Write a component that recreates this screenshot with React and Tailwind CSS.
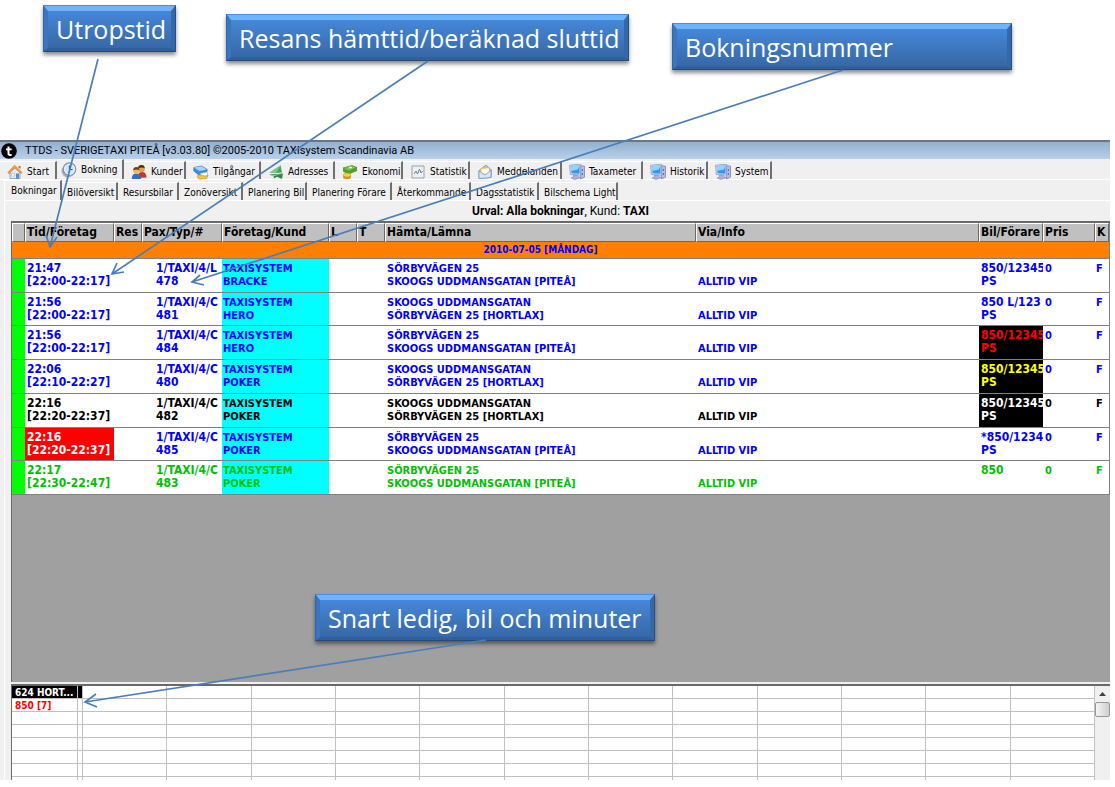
import React from "react";

const House = () => (
  <svg viewBox="0 0 16 16" className="size-4 shrink-0">
    <path d="M3 8v6.500h10V8L8 3.500z" fill="#dfeaf6" stroke="#8fa9c8" />
    <path d="M9 9.500h3v5H9z" fill="#4d8fd6" />
    <path d="M4.500 9.500h3v2.500h-3z" fill="#fff" stroke="#9db6d2" strokeWidth=".6" />
    <path d="M11.500 2h2v3l-2-1.500z" fill="#c96a2b" />
    <path d="M.8 8.600 7.600 1.200l7.600 7.400-1.300.9-6.300-5.700-5.500 5.900z" fill="#f2a146" stroke="#cf7420" strokeWidth=".6" />
  </svg>
);
const Clock = () => (
  <svg viewBox="0 0 16 16" className="size-4 shrink-0">
    <circle cx="7" cy="9" r="6.500" fill="#a3afbf" />
    <circle cx="8.500" cy="7.200" r="6.300" fill="#e6f1fb" stroke="#8093ab" strokeWidth="1.200" />
    <circle cx="8.500" cy="7.200" r="4.600" fill="#cfe4f8" />
    <path d="M8.500 3.500v4h3" fill="none" stroke="#31537c" strokeWidth="1.200" />
  </svg>
);
const Users = () => (
  <svg viewBox="0 0 16 16" className="size-4 shrink-0">
    <path d="M7 14c0-4 1-6 4-6s4.500 2 4.500 5.500z" fill="#c0392b" />
    <circle cx="10.500" cy="5" r="3.200" fill="#e0a04e" />
    <path d="M7 4.500C7 1.500 9 .8 10.800 1c2 .2 3 1.500 3 3.500-2-1.500-4-1.500-6.800 0z" fill="#4b2c14" />
    <path d="M.8 15c0-4 1.700-5.500 4.500-5.500S10 11 10 15z" fill="#2e6fc7" />
    <circle cx="5.300" cy="7" r="3" fill="#f0b768" />
    <path d="M2.200 6.500c0-2.600 1.400-3.500 3.100-3.500s3.200 1 3.100 3.300c-2-1-4-1-6.200.2z" fill="#6b3b14" />
  </svg>
);
const Assets = () => (
  <svg viewBox="0 0 16 16" className="size-4 shrink-0">
    <path d="m.8 3.500 8-1.500 5.500 3.500-1 4-7.500 1.500L.8 7z" fill="#3c8fe0" stroke="#2765ac" strokeWidth=".6" />
    <path d="m1 3.600 7.800-1.400 5 3.200-7.300 1.700z" fill="#a9d4fa" />
    <path d="M7 9.500 14 8l1 4-6 1.500z" fill="#fff" stroke="#8ea1b5" strokeWidth=".6" />
    <path d="M4.500 11.500c2-1 5-.5 7 .5l3.500-.5-1.500 3-6 .7c-2 0-3.300-1.200-3-3.700z" fill="#f4c534" stroke="#c58f12" strokeWidth=".6" />
  </svg>
);
const Plane = () => (
  <svg viewBox="0 0 16 16" className="size-4 shrink-0">
    <path d="M12.500 1 14 8.500 7.500 9z" fill="#4aa35b" />
    <path d="M12.500 1 1 8.700l6.500.5z" fill="#7cc58a" />
    <path d="m1 10.500 14-1-1 5.500-5-2.200-3 1.700-.5-2.500z" fill="#2e8a45" />
    <path d="m3 11.200 11-1.500-8.500 2.500z" fill="#8fd09b" />
  </svg>
);
const Money = () => (
  <svg viewBox="0 0 16 16" className="size-4 shrink-0">
    <path d="m1 4 9-2.500 5 2L6.500 7z" fill="#7cc24e" stroke="#3f8a1e" strokeWidth=".7" />
    <path d="m1 4 5.500 3v3.500L1 7.500zM6.500 7 15 3.500V7l-8.500 3.500z" fill="#4da02d" />
    <path d="M7 3.500h3" stroke="#e8f6df" strokeWidth="1.500" />
    <ellipse cx="5" cy="13" rx="4" ry="2.200" fill="#d9951a" />
    <ellipse cx="5" cy="11" rx="4" ry="2" fill="#f8cf48" stroke="#c48a14" strokeWidth=".5" />
  </svg>
);
const Chart = () => (
  <svg viewBox="0 0 16 16" className="size-4 shrink-0">
    <path d="M2 2h12v12H2z" fill="#eef1f4" stroke="#9aa0a6" />
    <path d="M4 10 6 7l1.500 3 2-5 1.500 4 1.500-2" fill="none" stroke="#6a7f9e" />
  </svg>
);
const Mail = () => (
  <svg viewBox="0 0 16 16" className="size-4 shrink-0">
    <path d="M2 6.500 9 1l5.500 5-.5 7.500-12 1z" fill="#a9c9ea" stroke="#6f93bd" strokeWidth=".8" />
    <path d="m4 4.500 8-1 .8 5L8 11 3.800 8.500z" fill="#fff8ea" stroke="#f1b24a" />
    <path d="m2 7 6 4 6.200-5-.4 7.500L2 14.500z" fill="#d6e7f8" stroke="#6f93bd" strokeWidth=".7" />
  </svg>
);
const Computer = () => (
  <svg viewBox="0 0 16 16" className="size-4 shrink-0">
    <path d="m11 1.500 4.500.7v11l-4 1.800z" fill="#b4bce0" stroke="#7078ad" strokeWidth=".7" />
    <path d="M13.300 5v2M13.300 9v2" stroke="#4f5fb8" />
    <path d="m.6 1.200 11-1v11l-10.300-.7z" fill="#d4dcef" stroke="#8390b5" strokeWidth=".7" />
    <path d="m1.800 2.300 8.700-.8v8.300l-8-.6z" fill="#2b9af3" />
    <path d="m1.800 2.300 8.700-.8-1.500 4-7 1.500z" fill="#8fd3ff" />
    <path d="m4.500 11 4 .2.500 1.500 2.500 1-5.500 1.800-4-1.500 2.500-1z" fill="#a9b2d8" stroke="#7078ad" strokeWidth=".5" />
  </svg>
);

const mainTabs = [
  { label: "Start", Icon: House, cls: "w-[57px]" },
  { label: "Bokning", Icon: Clock, cls: "w-[67px]", active: true },
  { label: "Kunder", Icon: Users, cls: "w-[62px]" },
  { label: "Tilgångar", Icon: Assets, cls: "w-[75px]" },
  { label: "Adresses", Icon: Plane, cls: "w-[74px]" },
  { label: "Ekonomi", Icon: Money, cls: "w-[68px]" },
  { label: "Statistik", Icon: Chart, cls: "w-[67px]" },
  { label: "Meddelanden", Icon: Mail, cls: "w-[92px]" },
  { label: "Taxameter", Icon: Computer, cls: "w-[81px]" },
  { label: "Historik", Icon: Computer, cls: "w-[65px]" },
  { label: "System", Icon: Computer, cls: "w-[64px]" },
];

const subTabs = [
  { label: "Bokningar", cls: "w-[57px]", active: true },
  { label: "Bilöversikt", cls: "w-[56px]" },
  { label: "Resursbilar", cls: "w-[61px]" },
  { label: "Zonöversikt", cls: "w-[64px]" },
  { label: "Planering Bil", cls: "w-[64px]" },
  { label: "Planering Förare", cls: "w-[85px]" },
  { label: "Återkommande", cls: "w-[79px]" },
  { label: "Dagsstatistik", cls: "w-[68px]" },
  { label: "Bilschema Light", cls: "w-[79px]" },
];

const columns = [
  { label: "", cls: "w-[13px]" },
  { label: "Tid/Företag", cls: "w-[89px]" },
  { label: "Res", cls: "w-[28px]" },
  { label: "Pax/Typ/#", cls: "w-[80px]" },
  { label: "Företag/Kund", cls: "w-[107px]" },
  { label: "L", cls: "w-[28px]" },
  { label: "T", cls: "w-[28px]" },
  { label: "Hämta/Lämna", cls: "w-[311px]" },
  { label: "Via/Info", cls: "" },
  { label: "Bil/Förare", cls: "w-[64px]" },
  { label: "Pris", cls: "w-[52px]" },
  { label: "K", cls: "w-[14px]" },
];

const S = "SÖRBYVÄGEN 25";
const G = "SKOOGS UDDMANSGATAN";
const blue = "text-[#0000ff]";

const bookings = [
  { call: "21:47", span: "[22:00-22:17]", type: "1/TAXI/4/L", no: "478", who: "BRACKE", from: S, to: `${G} [PITEÅ]`, car: "850/12345", ps: "PS", color: blue, row: "h-[34px]" },
  { call: "21:56", span: "[22:00-22:17]", type: "1/TAXI/4/C", no: "481", who: "HERO", from: G, to: `${S} [HORTLAX]`, car: "850 L/123", ps: "PS", color: blue, row: "h-[33px]" },
  { call: "21:56", span: "[22:00-22:17]", type: "1/TAXI/4/C", no: "484", who: "HERO", from: S, to: `${G} [PITEÅ]`, car: "850/12345", ps: "PS", color: blue, carCls: "bg-black text-[#ff0000]", row: "h-[34px]" },
  { call: "22:06", span: "[22:10-22:27]", type: "1/TAXI/4/C", no: "480", who: "POKER", from: G, to: `${S} [HORTLAX]`, car: "850/12345", ps: "PS", color: blue, carCls: "bg-black text-[#ffff00]", row: "h-[34px]" },
  { call: "22:16", span: "[22:20-22:37]", type: "1/TAXI/4/C", no: "482", who: "POKER", from: G, to: `${S} [HORTLAX]`, car: "850/12345", ps: "PS", color: "text-black", carCls: "bg-black text-white", row: "h-[34px]" },
  { call: "22:16", span: "[22:20-22:37]", type: "1/TAXI/4/C", no: "485", who: "POKER", from: S, to: `${G} [PITEÅ]`, car: "*850/1234", ps: "PS", color: blue, timeCls: "bg-[#ff0000] text-white", row: "h-[33px]" },
  { call: "22:17", span: "[22:30-22:47]", type: "1/TAXI/4/C", no: "483", who: "POKER", from: S, to: `${G} [PITEÅ]`, car: "850", ps: "", color: "text-[#00c000]", row: "h-[34px]" },
];

function Cell({ top, bottom, className = "" }) {
  return (
    <td className={`overflow-hidden whitespace-pre border-b border-[#808080] pt-[3px] align-top ${className}`}>
      <div>{top || " "}</div>
      <div>{bottom}</div>
    </td>
  );
}

function Callout({ children, className }) {
  return (
    <div className={`absolute h-[47px] border border-t-[#4a8ee0] border-r-[#244f87] border-b-[#244a7c] border-l-[#2f66aa] shadow-[0_3px_4px_rgba(0,0,0,0.45)] ${className}`}>
      <div className="flex h-full items-center border-x-4 border-t-[5px] border-b-[3px] border-t-[#6db4fb] border-r-[#3468a9] border-b-[#305f99] border-l-[#3a76c0] bg-linear-to-b from-[#4587d9] to-[#3768a6] pl-2 font-['Open_Sans',sans-serif] text-[25px] leading-none whitespace-nowrap text-white">
        {children}
      </div>
    </div>
  );
}

const arrows = [
  "M98 59 50 247M46 235l4 12 7-10",
  "M428 61 112 274M117 263l-5 11 12-2",
  "M843 70 192 282M200 275l-8 7 12 3",
  "M486 640 85 702M96 694l-11 8 12 5",
];

export default function App() {
  return (
    <div className="relative bg-white pt-[140px] pb-[7px] font-['DejaVu_Sans_Condensed','DejaVu_Sans',sans-serif] text-[11px] text-black">
      <main className="mr-[5px] bg-[#f0f0f0]">
        <header className="flex h-[19px] items-center gap-2 border-t-2 border-[#677786] bg-linear-to-b from-[#93b0cf] to-[#b8d0eb] pl-[1px]">
          <svg viewBox="0 0 16 16" className="size-4 shrink-0">
            <circle cx="8" cy="8" r="7.800" fill="#000" />
            <path d="M6.500 3.500h2v2h2.200v1.700H8.500v3.100c0 .8.600 1.100 2.200.8v1.700c-2.800.6-4.200-.2-4.200-2.200V7.200H5V5.500h1.500z" fill="#fff" />
          </svg>
          <h1 className="font-['Roboto',sans-serif] text-[11px] leading-4 whitespace-nowrap">
            TTDS - SVERIGETAXI PITEÅ [v3.03.80] ©2005-2010 TAXIsystem Scandinavia AB
          </h1>
        </header>

        <nav aria-label="Moduler" className="flex h-[21px] items-end border-b border-white text-[10px]">
          {mainTabs.map(({ label, Icon, cls, active }) => (
            <button
              key={label}
              className={`flex shrink-0 items-center gap-1 border-t border-r-2 border-t-white border-r-[#707070] whitespace-nowrap ${active ? "h-5 pl-1" : "h-[18px] pt-0.5 pl-[7px]"} ${cls}`}
            >
              <Icon />
              {label}
            </button>
          ))}
        </nav>

        <section className="ml-[4px] border-l border-white">
          <nav aria-label="Vyer" className="flex h-[21px] items-end border-b border-white">
            {subTabs.map(({ label, cls, active }) => (
              <button
                key={label}
                className={`shrink-0 border-t border-r-2 border-t-white border-r-[#707070] text-left text-[10px] whitespace-nowrap ${active ? "h-5 pl-1.5" : "h-[18px] pt-0.5 pl-[5px]"} ${cls}`}
              >
                {label}
              </button>
            ))}
          </nav>

          <div className="ml-[6px]">
            <p className="flex h-5 items-center justify-center font-['Roboto',sans-serif] text-[12px] whitespace-pre">
              <b>Urval: Alla bokningar</b>, Kund: <b>TAXI</b>
            </p>

            <div className="border-t-2 border-l border-[#696969] bg-[#a0a0a0]">
              <div className="h-[459px]">
                <table className="w-full table-fixed border-separate border-spacing-0 border-r border-[#808080] leading-[13px] font-bold">
                  <colgroup>
                    {columns.map((c, i) => (
                      <col key={i} className={c.cls} />
                    ))}
                  </colgroup>
                  <thead>
                    <tr className="h-[19px] text-[12px]">
                      {columns.map((c, i) => (
                        <th key={i} scope="col" className="overflow-hidden border-t border-r border-b border-l border-t-white border-r-[#696969] border-b-[#696969] border-l-white bg-[#c0c0c0] p-0 pl-px text-left whitespace-nowrap">
                          {c.label}
                        </th>
                      ))}
                    </tr>
                  </thead>
                  <tbody>
                    <tr className="h-[17px]">
                      <th colSpan={12} scope="rowgroup" className="border-b border-[#808080] bg-[#ff8000] p-0 pr-10 text-center text-[10px] leading-3 text-[#0000ff]">
                        2010-07-05 [MÅNDAG]
                      </th>
                    </tr>
                    {bookings.map((b) => (
                      <tr key={b.no} className={`bg-white ${b.color} ${b.row}`}>
                        <Cell className="bg-[#00ff00]" />
                        <Cell top={b.call} bottom={b.span} className={`pl-0.5 text-[12px] ${b.timeCls || ""}`} />
                        <Cell />
                        <Cell top={b.type} bottom={b.no} className="pl-3.5 text-[12px]" />
                        <Cell top="TAXISYSTEM" bottom={b.who} className="bg-[#00ffff] pl-px" />
                        <Cell />
                        <Cell />
                        <Cell top={b.from} bottom={b.to} className="pl-0.5" />
                        <Cell bottom="ALLTID VIP" className="pl-0.5" />
                        <Cell top={b.car} bottom={b.ps} className={`pl-0.5 text-[12px] ${b.carCls || ""}`} />
                        <Cell top="0" className="pl-0.5" />
                        <Cell top="F" className="pl-px" />
                      </tr>
                    ))}
                  </tbody>
                </table>
              </div>
            </div>

            <div className="mt-0.5 flex h-24 overflow-hidden border-t-2 border-l border-[#696969] bg-white">
              <div className="min-w-0 flex-1">
                <table className="w-full table-fixed border-separate border-spacing-0 text-[10px] leading-[10px] font-bold">
                  <colgroup>
                    <col className="w-[66px]" />
                    <col className="w-[5px]" />
                    {Array.from({ length: 12 }, (_, i) => (
                      <col key={i} />
                    ))}
                  </colgroup>
                  <tbody>
                    {Array.from({ length: 8 }, (_, r) => (
                      <tr key={r} className="h-[13px]">
                        {Array.from({ length: 14 }, (_, c) => (
                          <td
                            key={c}
                            className={`overflow-hidden border-r border-b border-[#c0c0c0] p-0 whitespace-nowrap ${c === 0 ? "pt-0.5 pl-[3px]" : ""} ${r === 0 && c < 2 ? "bg-black text-white" : "text-[#ff0000]"}`}
                          >
                            {c === 0 && r === 0 ? "624 HORT..." : c === 0 && r === 1 ? "850 [7]" : ""}
                          </td>
                        ))}
                      </tr>
                    ))}
                  </tbody>
                </table>
              </div>
              <div className="flex w-[15px] shrink-0 flex-col bg-[#f0f0f0]">
                <button aria-label="Rulla upp" className="flex h-4 items-center justify-center">
                  <svg viewBox="0 0 7 4" className="h-1 w-[7px]">
                    <path d="M0 4 3.500 0 7 4z" fill="#404040" />
                  </svg>
                </button>
                <button aria-label="Rullningslist" className="h-[15px] rounded-xs border border-[#979797] bg-linear-to-r from-[#f5f5f5] to-[#cfcfcf]" />
              </div>
            </div>
          </div>
        </section>
      </main>

      <Callout className="top-[5px] left-[43px] w-[133px]">Utropstid</Callout>
      <Callout className="top-[14px] left-[226px] w-[403px]">Resans hämttid/beräknad sluttid</Callout>
      <Callout className="top-[23px] left-[672px] w-[340px]">Bokningsnummer</Callout>
      <Callout className="top-[594px] left-[315px] w-[340px]">Snart ledig, bil och minuter</Callout>

      <svg className="pointer-events-none absolute top-0 left-0 h-[787px] w-[1115px]" viewBox="0 0 1115 787" fill="none" stroke="#4a7ebb" strokeWidth="1.700">
        {arrows.map((d) => (
          <path key={d} d={d} />
        ))}
      </svg>
    </div>
  );
}
